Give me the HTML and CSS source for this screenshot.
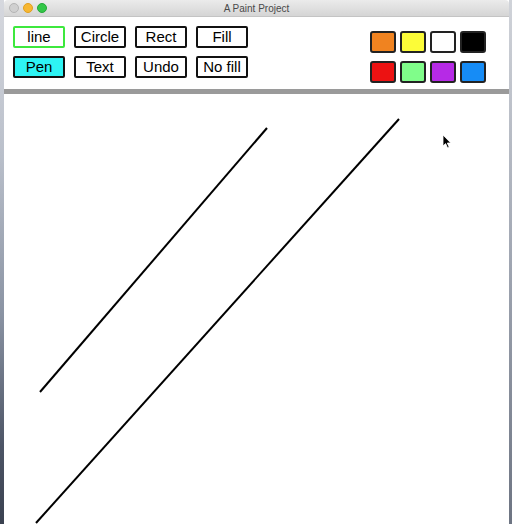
FILE: index.html
```html
<!DOCTYPE html>
<html>
<head>
<meta charset="utf-8">
<link rel="stylesheet" href="styles.css">
</head>
<body>
<div class="desktop">
  <div class="strip left"></div>
  <div class="window">
    <div class="titlebar">
      <div class="lights">
        <span class="light close"></span>
        <span class="light min"></span>
        <span class="light max"></span>
      </div>
      <div class="title">A Paint Project</div>
    </div>
    <div class="toolbar">
      <div class="tools">
        <div class="btn active-tool">line</div>
        <div class="btn">Circle</div>
        <div class="btn">Rect</div>
        <div class="btn">Fill</div>
        <div class="btn pen">Pen</div>
        <div class="btn">Text</div>
        <div class="btn">Undo</div>
        <div class="btn">No fill</div>
      </div>
      <div class="swatches">
        <div class="sw orange"></div>
        <div class="sw yellow"></div>
        <div class="sw white"></div>
        <div class="sw black"></div>
        <div class="sw red"></div>
        <div class="sw green"></div>
        <div class="sw purple"></div>
        <div class="sw blue"></div>
      </div>
    </div>
    <div class="divider"></div>
    <div class="canvas">
      <svg class="drawing" width="505" height="430" viewBox="0 0 505 430">
        <line x1="36" y1="298" x2="263" y2="34" stroke="#000" stroke-width="2"/>
        <line x1="32" y1="429" x2="395" y2="25" stroke="#000" stroke-width="2"/>
      </svg>
      <svg class="cursor" width="10" height="15" viewBox="0 0 10 15">
        <path d="M1 1 L1 12 L3.6 9.6 L5.6 14 L7.2 13.3 L5.3 9 L8.8 9 Z" fill="#000" stroke="#fff" stroke-width="0.8"/>
      </svg>
    </div>
  </div>
  <div class="strip right"></div>
</div>
</body>
</html>
```
FILE: styles.css
```css
* { box-sizing: border-box; }
html, body { margin: 0; padding: 0; }
body {
  width: 512px;
  height: 524px;
  overflow: hidden;
  font-family: "Liberation Sans", Arial, sans-serif;
}
.desktop {
  display: flex;
  width: 512px;
  height: 524px;
}
.strip { flex: none; height: 524px; }
.strip.left {
  width: 4px;
  background: linear-gradient(#d6d8de 0%, #b9bfca 30%, #8a93a3 60%, #4d5566 85%, #3a4150 100%);
}
.strip.right {
  width: 3px;
  background: linear-gradient(#d0d3d9 0%, #a0a6b2 50%, #6d7482 100%);
}
.window {
  width: 505px;
  flex: none;
  display: flex;
  flex-direction: column;
  background: #fff;
}
.titlebar {
  height: 17px;
  flex: none;
  position: relative;
  background: linear-gradient(#ebebeb, #d5d5d5);
  border-top-left-radius: 4px;
  border-top-right-radius: 4px;
  border-bottom: 1px solid #c4c4c4;
  display: flex;
  align-items: center;
  justify-content: center;
}
.lights {
  position: absolute;
  left: 5px;
  top: 3px;
  display: flex;
  gap: 4px;
}
.light {
  width: 10px;
  height: 10px;
  border-radius: 50%;
  display: block;
}
.light.close { background: #d0d0d0; border: 1px solid #b5b5b5; }
.light.min { background: #f7b731; border: 1px solid #e0a020; }
.light.max { background: #33c748; border: 1px solid #25a839; }
.title {
  font-size: 10px;
  color: #4a4a4a;
  font-family: "Liberation Sans", Arial, sans-serif;
}
.toolbar {
  height: 72px;
  flex: none;
  display: flex;
  justify-content: space-between;
  padding: 9px 23px 0 9px;
}
.tools {
  display: grid;
  grid-template-columns: repeat(4, 52px);
  grid-auto-rows: 22px;
  column-gap: 9px;
  row-gap: 8px;
}
.btn {
  border: 2px solid #111;
  border-radius: 2px;
  background: #fff;
  font-size: 15px;
  line-height: 18px;
  text-align: center;
  color: #000;
}
.btn.active-tool { border-color: #3de83d; }
.btn.pen { background: #2ef4f4; }
.swatches {
  margin-top: 5px;
  display: grid;
  grid-template-columns: repeat(4, 26px);
  grid-auto-rows: 22px;
  column-gap: 4px;
  row-gap: 8px;
}
.sw {
  border: 2px solid #222;
  border-radius: 3px;
}
.orange { background: #f08320; }
.yellow { background: #fcfc38; }
.white { background: #fff; }
.black { background: #000; }
.red { background: #ec1212; }
.green { background: #80fd8a; }
.purple { background: #b62ae6; }
.blue { background: #168cf6; }
.divider {
  height: 5px;
  flex: none;
  background: #9a9a9a;
}
.canvas {
  flex: 1;
  position: relative;
  background: #fff;
}
.drawing { display: block; }
.cursor {
  position: absolute;
  left: 438px;
  top: 40px;
}
```
